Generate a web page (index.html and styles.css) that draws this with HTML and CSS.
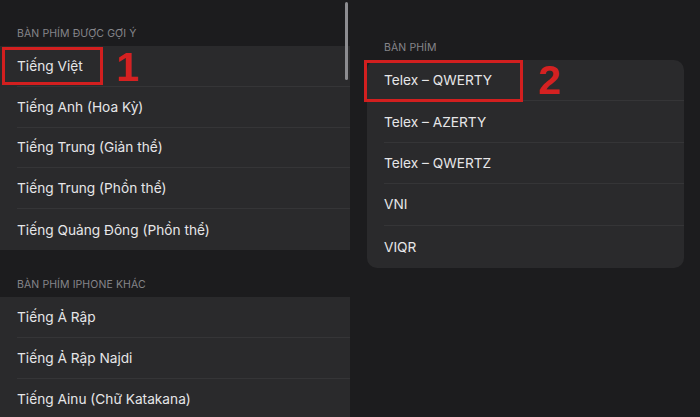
FILE: index.html
```html
<!DOCTYPE html>
<html lang="vi">
<head>
    <meta charset="UTF-8">
    <title>Bàn phím</title>
    <link rel="stylesheet" href="styles.css">
</head>
<body>
    <div class="page">
        <div class="pane-left">
            <div class="scrollbar"></div>

            <div class="section-title">Bàn phím được gợi ý</div>
            <div class="group">
                <div class="row">
                    <div class="row-label">Tiếng Việt</div>
                    <span class="mark mark-1"></span>
                    <span class="step step-1">1</span>
                </div>
                <div class="row"><div class="row-label">Tiếng Anh (Hoa Kỳ)</div></div>
                <div class="row"><div class="row-label">Tiếng Trung (Giản thể)</div></div>
                <div class="row"><div class="row-label">Tiếng Trung (Phồn thể)</div></div>
                <div class="row"><div class="row-label">Tiếng Quảng Đông (Phồn thể)</div></div>
            </div>

            <div class="section-title second">Bàn phím iPhone khác</div>
            <div class="group">
                <div class="row"><div class="row-label">Tiếng Ả Rập</div></div>
                <div class="row"><div class="row-label">Tiếng Ả Rập Najdi</div></div>
                <div class="row"><div class="row-label">Tiếng Ainu (Chữ Katakana)</div></div>
            </div>
        </div>

        <div class="pane-right">
            <div class="section-title">Bàn phím</div>
            <div class="card">
                <div class="row">
                    <div class="row-label">Telex – QWERTY</div>
                    <span class="mark mark-2"></span>
                    <span class="step step-2">2</span>
                </div>
                <div class="row"><div class="row-label">Telex – AZERTY</div></div>
                <div class="row"><div class="row-label">Telex – QWERTZ</div></div>
                <div class="row"><div class="row-label">VNI</div></div>
                <div class="row"><div class="row-label">VIQR</div></div>
            </div>
        </div>
    </div>
</body>
</html>
```

FILE: styles.css
```css
* {
    margin: 0;
    padding: 0;
    box-sizing: border-box;
}

body {
    font-family: 'Inter', 'Roboto', 'Noto Sans', sans-serif;
    background: #1c1c1e;
    color: #e6e6e8;
    width: 700px;
    height: 417px;
    overflow: hidden;
}

.page {
    display: flex;
    height: 417px;
}

.pane-left {
    position: relative;
    width: 350px;
    flex-shrink: 0;
}

.pane-right {
    flex: 1;
    padding: 0 16px 0 17px;
}

.scrollbar {
    position: absolute;
    left: 345px;
    top: 2px;
    width: 3px;
    height: 78px;
    border-radius: 2px;
    background: #8d8d91;
}

.section-title {
    padding: 28px 17px 6px;
    font-size: 10.5px;
    line-height: 12px;
    text-transform: uppercase;
    color: #85858a;
    letter-spacing: 0.1px;
}

.section-title.second {
    padding-top: 29px;
}

.pane-right .section-title {
    padding-top: 42px;
}

.group {
    background: #2a2a2c;
}

.card {
    background: #2a2a2c;
    border-radius: 10px;
}

.row {
    position: relative;
    padding-left: 17px;
}

.row-label {
    height: 41.4px;
    display: flex;
    align-items: center;
    font-size: 13.7px;
    border-bottom: 1px solid #353537;
}

.group .row-label {
    height: 40.8px;
}

.row:last-child .row-label {
    border-bottom: none;
}

.card .row:last-child .row-label {
    height: 42px;
}

/* red annotation boxes */
.mark {
    position: absolute;
    border: 3px solid #d21f1f;
}

.mark-1 {
    left: 2px;
    top: 1px;
    width: 101px;
    height: 38px;
}

.mark-2 {
    left: -3px;
    top: 0;
    width: 159px;
    height: 42px;
}

.step {
    position: absolute;
    font-family: 'Liberation Sans', Arial, sans-serif;
    font-weight: bold;
    font-size: 41px;
    line-height: 41px;
    color: #d52121;
}

.step-1 {
    left: 116px;
    top: 1px;
}

.step-2 {
    left: 171px;
    top: 0;
}
```
